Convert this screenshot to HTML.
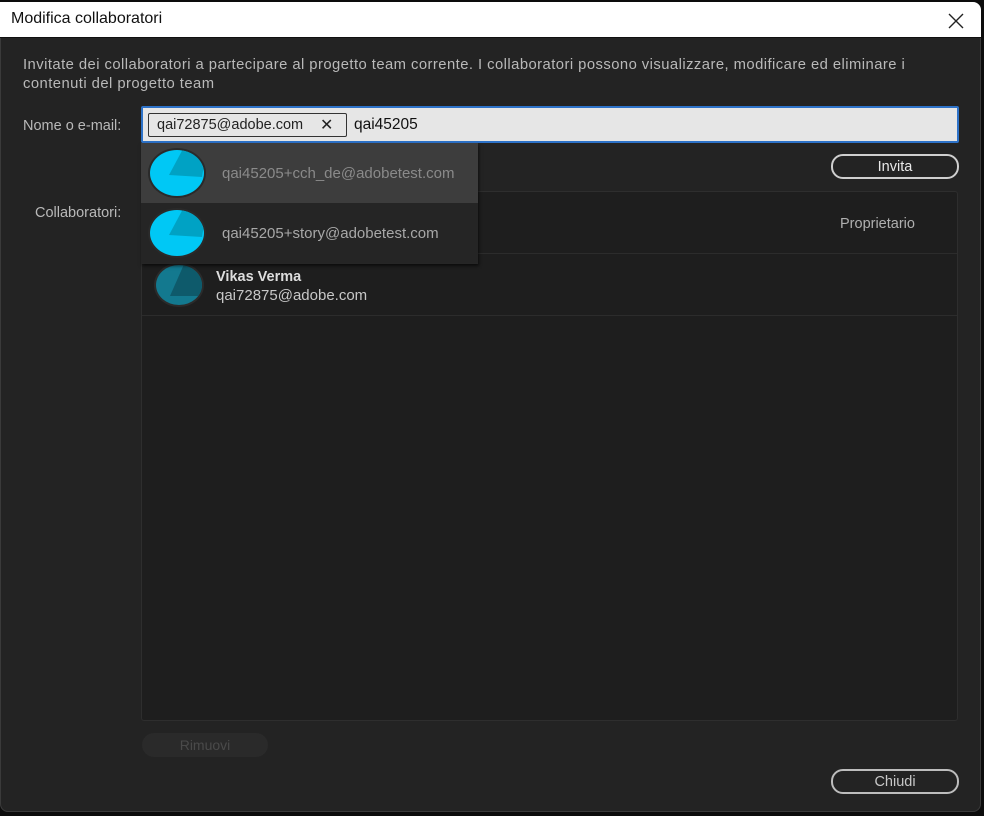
<!DOCTYPE html>
<html><head><meta charset="utf-8"><style>
*{box-sizing:border-box;margin:0;padding:0}
body{width:984px;height:816px;background:#0c0c0c;position:relative;overflow:hidden;font-family:"Liberation Sans","DejaVu Sans",sans-serif;}
.dlg{position:absolute;left:0;top:2px;width:981px;height:810px;background:#232323;border-radius:0 8px 8px 8px;overflow:hidden;box-shadow:inset 0 0 0 1px #3a3a3a}
.title{position:absolute;left:0;top:0;width:100%;height:36px;background:#fff;border-bottom:1px solid #111}
.title span{position:absolute;left:11px;top:8px;font-size:16px;color:#111}
.x{position:absolute;left:946px;top:9px}
.abs{position:absolute}
.t{color:#b9b9b9;font-size:14.5px}
.inp{position:absolute;left:141px;top:104px;width:818px;height:37px;background:#e6e6e6;border:2px solid #2d72c8;border-radius:2px}
.chip{position:absolute;left:5px;top:5px;width:199px;height:24px;border:1px solid #333;border-radius:2px;font-size:14.5px;color:#222;padding:3px 0 0 8px}
.list{position:absolute;left:141px;top:189px;width:817px;height:530px;background:#1e1e1e;border:1px solid #2e2e2e;border-radius:3px}
.btn{position:absolute;border:2px solid #cfcfcf;border-radius:12px;color:#e8e8e8;font-size:14.5px;text-align:center}
.dd{position:absolute;left:141px;top:141px;width:337px;height:121px;background:#262626;box-shadow:1px 2px 3px rgba(0,0,0,.6)}
.row{position:absolute;left:0;width:337px;height:60px}
.em{position:absolute;left:81px;top:22px;font-size:15px;color:#8a8a8a}
</style></head><body>
<div class="dlg">
 <div class="title"><span>Modifica collaboratori</span>
  <svg class="x" width="20" height="20" viewBox="0 0 20 20"><path d="M3 3L17 17M17 3L3 17" stroke="#222" stroke-width="1.4"/></svg></div>
 <div class="abs t" style="left:23px;top:54px;line-height:19px;width:905px;font-size:14.8px;letter-spacing:0.45px">Invitate dei collaboratori a partecipare al progetto team corrente. I collaboratori possono visualizzare, modificare ed eliminare i contenuti del progetto team</div>
 <div class="abs t" style="left:23px;top:116px">Nome o e-mail:</div>
 <div class="inp"><div class="chip">qai72875@adobe.com <span style="position:absolute;left:171px;top:1px;font-size:16px">✕</span></div>
  <span style="position:absolute;left:211px;top:8px;font-size:15.5px;color:#111">qai45205</span></div>
 <div class="btn" style="left:831px;top:152px;width:128px;height:25px;padding-top:3px">Invita</div>
 <div class="abs t" style="left:35px;top:203px">Collaboratori:</div>
 <div class="list">
  <div class="abs" style="left:0;top:61px;width:100%;height:1px;background:#2c2c2c"></div>
  <div class="abs" style="left:0;top:123px;width:100%;height:1px;background:#2c2c2c"></div>
  <div class="abs" style="left:698px;top:24px;font-size:14.5px;color:#b0b0b0">Proprietario</div>
  <svg class="abs" style="left:11px;top:70px" width="52" height="46" viewBox="0 0 52 46"><defs><clipPath id="c3"><ellipse cx="26" cy="23" rx="23" ry="20"/></clipPath></defs><ellipse cx="26" cy="23" rx="25" ry="22" fill="#2b2b2b"/><ellipse cx="26" cy="23" rx="23" ry="20" fill="#13798f"/><polygon clip-path="url(#c3)" points="32,0 17,34 52,34 52,0" fill="#0e5a6b"/></svg>
  <div class="abs" style="left:74px;top:77px;font-size:14.5px;color:#ddd;font-weight:bold">Vikas Verma</div>
  <div class="abs" style="left:74px;top:95px;font-size:15px;color:#c8c8c8">qai72875@adobe.com</div>
 </div>
 <div class="dd">
  <div class="row" style="top:0;background:#3d3d3d">
   <svg class="abs" style="left:6px;top:4px" width="60" height="52" viewBox="0 0 60 52"><defs><clipPath id="c1"><ellipse cx="30" cy="26" rx="27" ry="23"/></clipPath></defs><ellipse cx="30" cy="26" rx="29" ry="25" fill="#2a2a2a"/><ellipse cx="30" cy="26" rx="27" ry="23" fill="#00c8f5"/><polygon clip-path="url(#c1)" points="37,0 22,28 55,30 60,0" fill="#00a2c4"/></svg>
   <div class="em">qai45205+cch_de@adobetest.com</div></div>
  <div class="row" style="top:60px;background:#252525">
   <svg class="abs" style="left:6px;top:4px" width="60" height="52" viewBox="0 0 60 52"><defs><clipPath id="c2"><ellipse cx="30" cy="26" rx="27" ry="23"/></clipPath></defs><ellipse cx="30" cy="26" rx="29" ry="25" fill="#2a2a2a"/><ellipse cx="30" cy="26" rx="27" ry="23" fill="#00c8f5"/><polygon clip-path="url(#c2)" points="37,0 22,28 55,30 60,0" fill="#00a2c4"/></svg>
   <div class="em" style="color:#a8a8a8">qai45205+story@adobetest.com</div></div>
 </div>
 <div class="abs" style="left:142px;top:731px;width:126px;height:24px;background:#2a2a2a;border-radius:12px;color:#4a4a4a;font-size:14px;text-align:center;padding-top:4px">Rimuovi</div>
 <div class="btn" style="left:831px;top:767px;width:128px;height:25px;padding-top:3px;color:#c8c8c8;border-color:#bdbdbd">Chiudi</div>
</div>
</body></html>
